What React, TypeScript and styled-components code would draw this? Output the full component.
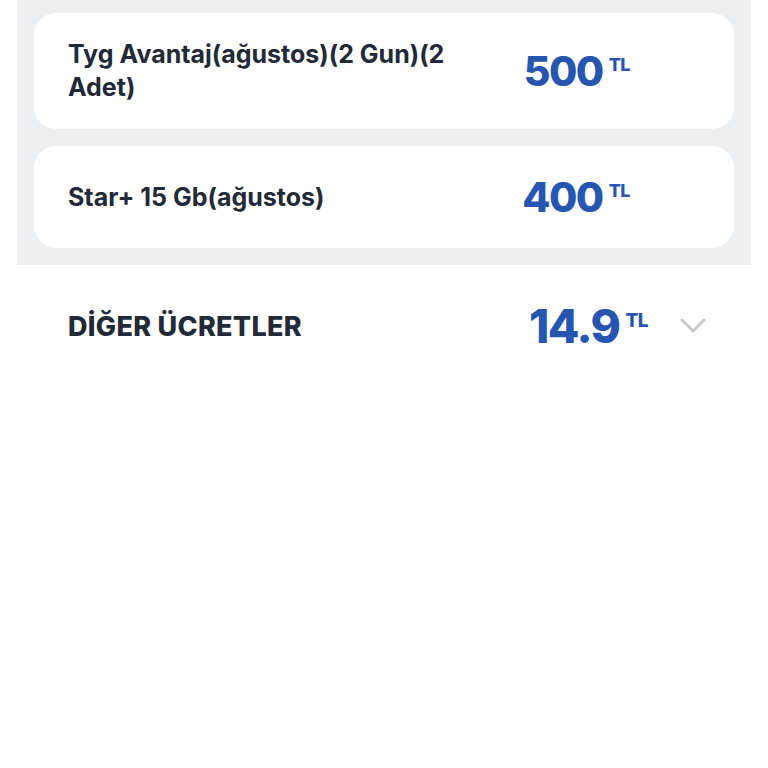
import React from 'react';
import styled, { createGlobalStyle } from 'styled-components';

const GlobalStyle = createGlobalStyle`
  html, body {
    margin: 0;
    padding: 0;
    background: #ffffff;
  }
  body {
    font-family: Inter, 'Noto Sans', sans-serif;
    -webkit-font-smoothing: antialiased;
  }
`;

const Page = styled.div`
  width: 768px;
  min-height: 768px;
  background: #ffffff;
`;

const Panel = styled.section`
  margin: 0 17px;
  padding: 13px 17px 17px;
  background: #edf0f3;
  display: flex;
  flex-direction: column;
  gap: 17px;
`;

const Card = styled.div`
  display: flex;
  align-items: center;
  justify-content: space-between;
  padding: 25px 104px 25px 34px;
  background: #ffffff;
  border-radius: 22px;
`;

const Name = styled.div`
  max-width: 410px;
  font-size: 25px;
  line-height: 33px;
  font-weight: 700;
  color: #232a37;
`;

const Price = styled.div<{ $size: number }>`
  display: flex;
  align-items: flex-start;
  gap: 6px;
  color: #2656b0;
  font-weight: 800;
  font-size: ${p => p.$size}px;
  line-height: 52px;
  letter-spacing: -1.5px;
`;

const Currency = styled.span<{ $size: number }>`
  font-size: ${p => p.$size}px;
  font-weight: 800;
  line-height: 1;
  margin-top: 0.6em;
  letter-spacing: -0.5px;
`;

const Summary = styled.div`
  display: flex;
  align-items: center;
  padding: 35px 62px 0 68px;
`;

const SummaryTitle = styled.div`
  flex: 1;
  font-size: 27px;
  font-weight: 800;
  color: #232a37;
  letter-spacing: 0.3px;
`;

const Chevron = styled.svg`
  margin-left: 32px;
  width: 26px;
  height: 16px;
`;

type Item = {
  name: string,
  amount: string,
};

const items: Item[] = [
  { name: 'Tyg Avantaj(ağustos)(2 Gun)(2 Adet)', amount: '500' },
  { name: 'Star+ 15 Gb(ağustos)', amount: '400' },
];

const App = () => (
  <Page>
    <GlobalStyle />
    <Panel>
      {items.map(item => (
        <Card key={item.name}>
          <Name>{item.name}</Name>
          <Price $size={41}>
            {item.amount}
            <Currency $size={18}>TL</Currency>
          </Price>
        </Card>
      ))}
    </Panel>
    <Summary>
      <SummaryTitle>DİĞER ÜCRETLER</SummaryTitle>
      <Price $size={46}>
        14.9
        <Currency $size={19}>TL</Currency>
      </Price>
      <Chevron viewBox='0 0 26 16'>
        <polyline points='2,2 13,13 24,2' fill='none' stroke='#c9c9c9' strokeWidth='3' strokeLinecap='round' strokeLinejoin='round' />
      </Chevron>
    </Summary>
  </Page>
);

export default App;
